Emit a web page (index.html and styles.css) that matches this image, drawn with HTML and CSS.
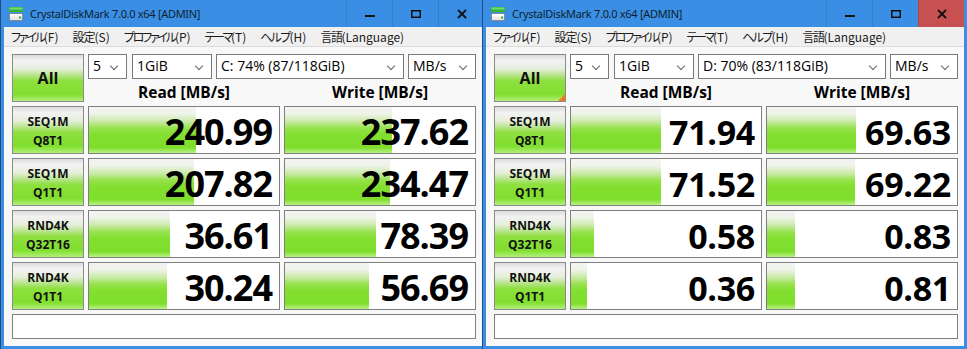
FILE: index.html
```html
<!DOCTYPE html>
<html lang="ja">
<head>
<meta charset="utf-8">
<title>CrystalDiskMark</title>
<link rel="stylesheet" href="styles.css">
</head>
<body>
<div class="desktop">

  <div class="win win-a">
    <div class="titlebar">
      <svg class="appicon" width="16" height="16" viewBox="0 0 16 16">
        <rect x="1" y="1" width="14" height="5" rx="1" fill="#36b536"/>
        <rect x="1.5" y="1.5" width="13" height="2" fill="#6fe06f"/>
        <rect x="1.5" y="7.5" width="13" height="7" rx="1.5" fill="#e9e9e9" stroke="#8a8a8a"/>
        <rect x="2" y="8" width="12" height="2.5" fill="#ffffff"/>
        <rect x="11" y="10.5" width="2" height="2" fill="#2fa82f"/>
      </svg>
      <span class="title">CrystalDiskMark 7.0.0 x64 [ADMIN]</span>
      <div class="caption">
        <span class="cbtn"><svg width="10" height="10" viewBox="0 0 10 10"><rect x="0" y="6" width="10" height="2" fill="#111"/></svg></span>
        <span class="cbtn"><svg width="10" height="10" viewBox="0 0 10 10"><rect x="0.75" y="1.75" width="8.5" height="6.5" fill="none" stroke="#111" stroke-width="1.5"/></svg></span>
        <span class="cbtn close"><svg width="10" height="10" viewBox="0 0 10 10"><path d="M1 1 L9 9 M9 1 L1 9" stroke="#111" stroke-width="1.8"/></svg></span>
      </div>
    </div>
    <div class="frame">
      <div class="menubar">
        <span class="mi"><span class="k k22">ファイル</span>(F)</span><span class="mi"><span class="k k10">設定</span>(S)</span><span class="mi"><span class="k k22">プロファイル</span>(P)</span><span class="mi"><span class="k k23">テーマ</span>(T)</span><span class="mi"><span class="k k17">ヘルプ</span>(H)</span><span class="mi"><span class="k k15">言語</span>(Language)</span>
      </div>
      <div class="client">
        <div class="grid">
          <div class="btn all">All</div>
          <div class="topright">
            <div class="controls">
              <div class="combo c-count">5<i class="chev"></i></div>
              <div class="combo c-size">1GiB<i class="chev"></i></div>
              <div class="combo c-drive">C: 74% (87/118GiB)<i class="chev"></i></div>
              <div class="combo c-unit">MB/s<i class="chev"></i></div>
            </div>
            <div class="heads">
              <div class="hd">Read [MB/s]</div>
              <div class="hd">Write [MB/s]</div>
            </div>
          </div>

          <div class="btn lbl">SEQ1M<br>Q8T1</div>
          <div class="cell" style="--w:107px">240.99</div>
          <div class="cell" style="--w:107px">237.62</div>

          <div class="btn lbl">SEQ1M<br>Q1T1</div>
          <div class="cell" style="--w:105px">207.82</div>
          <div class="cell" style="--w:105px">234.47</div>

          <div class="btn lbl">RND4K<br>Q32T16</div>
          <div class="cell" style="--w:81px">36.61</div>
          <div class="cell" style="--w:91px">78.39</div>

          <div class="btn lbl">RND4K<br>Q1T1</div>
          <div class="cell" style="--w:78px">30.24</div>
          <div class="cell" style="--w:84px">56.69</div>

          <div class="status"></div>
        </div>
      </div>
    </div>
  </div>

  <div class="win win-b">
    <div class="titlebar">
      <svg class="appicon" width="16" height="16" viewBox="0 0 16 16">
        <rect x="1" y="1" width="14" height="5" rx="1" fill="#36b536"/>
        <rect x="1.5" y="1.5" width="13" height="2" fill="#6fe06f"/>
        <rect x="1.5" y="7.5" width="13" height="7" rx="1.5" fill="#e9e9e9" stroke="#8a8a8a"/>
        <rect x="2" y="8" width="12" height="2.5" fill="#ffffff"/>
        <rect x="11" y="10.5" width="2" height="2" fill="#2fa82f"/>
      </svg>
      <span class="title">CrystalDiskMark 7.0.0 x64 [ADMIN]</span>
      <div class="caption">
        <span class="cbtn"><svg width="10" height="10" viewBox="0 0 10 10"><rect x="0" y="6" width="10" height="2" fill="#111"/></svg></span>
        <span class="cbtn"><svg width="10" height="10" viewBox="0 0 10 10"><rect x="0.75" y="1.75" width="8.5" height="6.5" fill="none" stroke="#111" stroke-width="1.5"/></svg></span>
        <span class="cbtn close hot"><svg width="10" height="10" viewBox="0 0 10 10"><path d="M1 1 L9 9 M9 1 L1 9" stroke="#111" stroke-width="1.8"/></svg></span>
      </div>
    </div>
    <div class="frame">
      <div class="menubar">
        <span class="mi"><span class="k k22">ファイル</span>(F)</span><span class="mi"><span class="k k10">設定</span>(S)</span><span class="mi"><span class="k k22">プロファイル</span>(P)</span><span class="mi"><span class="k k23">テーマ</span>(T)</span><span class="mi"><span class="k k17">ヘルプ</span>(H)</span><span class="mi"><span class="k k15">言語</span>(Language)</span>
      </div>
      <div class="client">
        <div class="grid">
          <div class="btn all marked">All</div>
          <div class="topright">
            <div class="controls">
              <div class="combo c-count">5<i class="chev"></i></div>
              <div class="combo c-size">1GiB<i class="chev"></i></div>
              <div class="combo c-drive">D: 70% (83/118GiB)<i class="chev"></i></div>
              <div class="combo c-unit">MB/s<i class="chev"></i></div>
            </div>
            <div class="heads">
              <div class="hd">Read [MB/s]</div>
              <div class="hd">Write [MB/s]</div>
            </div>
          </div>

          <div class="btn lbl">SEQ1M<br>Q8T1</div>
          <div class="cell" style="--w:90px">71.94</div>
          <div class="cell" style="--w:89px">69.63</div>

          <div class="btn lbl">SEQ1M<br>Q1T1</div>
          <div class="cell" style="--w:90px">71.52</div>
          <div class="cell" style="--w:88px">69.22</div>

          <div class="btn lbl">RND4K<br>Q32T16</div>
          <div class="cell" style="--w:23px">0.58</div>
          <div class="cell" style="--w:28px">0.83</div>

          <div class="btn lbl">RND4K<br>Q1T1</div>
          <div class="cell" style="--w:16px">0.36</div>
          <div class="cell" style="--w:28px">0.81</div>

          <div class="status"></div>
        </div>
      </div>
    </div>
  </div>

</div>
</body>
</html>
```

FILE: styles.css
```css
html, body {
  margin: 0;
  padding: 0;
  background: #3a8fe4;
}

.desktop {
  position: relative;
  width: 967px;
  height: 349px;
  overflow: hidden;
  font-family: "Open Sans", "Noto Sans", "Noto Sans CJK JP", sans-serif;
  color: #000;
}

/* windows on the desktop */
.win {
  position: absolute;
  top: 0;
  height: 349px;
  box-sizing: border-box;
  display: flex;
  flex-direction: column;
  background: #3a8fe4;
  border-left: 1px solid #1d4d80;
}
.win-a { left: 0; width: 487px; z-index: 1; }
.win-b { left: 482px; width: 485px; z-index: 2; }

/* title bar */
.titlebar {
  height: 27px;
  flex: none;
  display: flex;
  align-items: center;
  background: #3a8fe4;
}
.appicon {
  flex: none;
  margin-left: 7px;
  margin-right: 6px;
}
.title {
  font-family: "Noto Sans", "Open Sans", sans-serif;
  font-size: 11px;
  letter-spacing: -0.3px;
  color: #0f1f30;
  white-space: nowrap;
  flex: 1;
}
.caption {
  display: flex;
  align-self: stretch;
  margin-right: 3px;
}
.cbtn {
  width: 46px;
  display: flex;
  align-items: center;
  justify-content: center;
  border-left: 1px solid rgba(20, 60, 110, 0.18);
  box-sizing: border-box;
}
.cbtn.hot {
  background: #c75050;
}

/* frame & menu */
.frame {
  flex: 1;
  display: flex;
  flex-direction: column;
  margin: 0 3px 3px 3px;
  background: #f0f0f0;
}
.menubar {
  height: 19px;
  flex: none;
  display: flex;
  align-items: center;
  background: #f0f0f0;
  border-bottom: 1px solid #dcdcdc;
  font-family: "Noto Sans CJK JP", sans-serif;
  font-feature-settings: "palt" 1;
  font-size: 12px;
  color: #1a1a1a;
}
.mi {
  padding: 0 7px;
  white-space: nowrap;
}
.k23 { letter-spacing: -2.4px; }
.k22 { letter-spacing: -2.2px; }
.k17 { letter-spacing: -1.7px; }
.k15 { letter-spacing: -1.5px; }
.k10 { letter-spacing: -1px; }

.client {
  flex: 1;
  padding: 7px 0 0 8px;
  background: #f8f8f8;
}

.grid {
  display: grid;
  grid-template-columns: 72px 192px 192px;
  grid-template-rows: 48px 48px 48px 48px 48px 25px;
  column-gap: 4px;
  row-gap: 4px;
}

/* green buttons */
.btn {
  box-sizing: border-box;
  border: 1px solid #8a8a8a;
  background: linear-gradient(to bottom,
    #dcdcdc 0%, #f2f2f2 12%, #e6efdc 30%, #b4e486 45%, #8fe041 55%, #80de2e 85%, #b2f07a 100%);
  display: flex;
  align-items: center;
  justify-content: center;
  text-align: center;
  font-weight: 700;
  color: #111;
}
.all {
  font-size: 16px;
  position: relative;
}
.all.marked::after {
  content: "";
  position: absolute;
  right: 0;
  bottom: 0;
  width: 0;
  height: 0;
  border-style: solid;
  border-width: 0 0 7px 7px;
  border-color: transparent transparent #f07a1e transparent;
}
.lbl {
  font-size: 12px;
  line-height: 19px;
  padding-top: 2px;
}

/* top controls */
.topright {
  grid-column: 2 / 4;
  display: flex;
  flex-direction: column;
}
.controls {
  display: flex;
  height: 25px;
  gap: 4px;
}
.combo {
  box-sizing: border-box;
  height: 25px;
  border: 1px solid #7a7a7a;
  background: #fff;
  font-size: 14px;
  line-height: 22px;
  padding-left: 4px;
  position: relative;
  white-space: nowrap;
}
.c-count { width: 39px; margin-right: 1px; }
.c-size { width: 80px; }
.c-drive { width: 188px; }
.c-unit { width: 68px; }
.chev {
  position: absolute;
  right: 9px;
  top: 8px;
  width: 5px;
  height: 5px;
  border-right: 1.4px solid #666;
  border-bottom: 1.4px solid #666;
  transform: rotate(45deg);
}
.heads {
  flex: 1;
  display: grid;
  grid-template-columns: 192px 192px;
  column-gap: 4px;
}
.hd {
  text-align: center;
  font-weight: 700;
  font-size: 15.5px;
  line-height: 20px;
  padding-top: 3px;
}

/* value cells */
.cell {
  box-sizing: border-box;
  border: 1px solid #7f7f7f;
  background-color: #fff;
  background-image: linear-gradient(to bottom,
    #f4f4f4 0%, #eef3e8 15%, #c8eaa4 32%, #96e24c 46%, #82df30 60%, #7fde2c 88%, #b8f284 100%);
  background-repeat: no-repeat;
  background-size: var(--w) 100%;
  text-align: right;
  font-weight: 700;
  font-size: 34px;
  line-height: 46px;
  padding: 2px 6px 0 0;
  letter-spacing: -0.3px;
  color: #000;
}
.win-a .cell {
  font-size: 36px;
  letter-spacing: -1px;
  padding-right: 7px;
}

.status {
  grid-column: 1 / 4;
  box-sizing: border-box;
  border: 1px solid #7f7f7f;
  background: #fff;
}
```
